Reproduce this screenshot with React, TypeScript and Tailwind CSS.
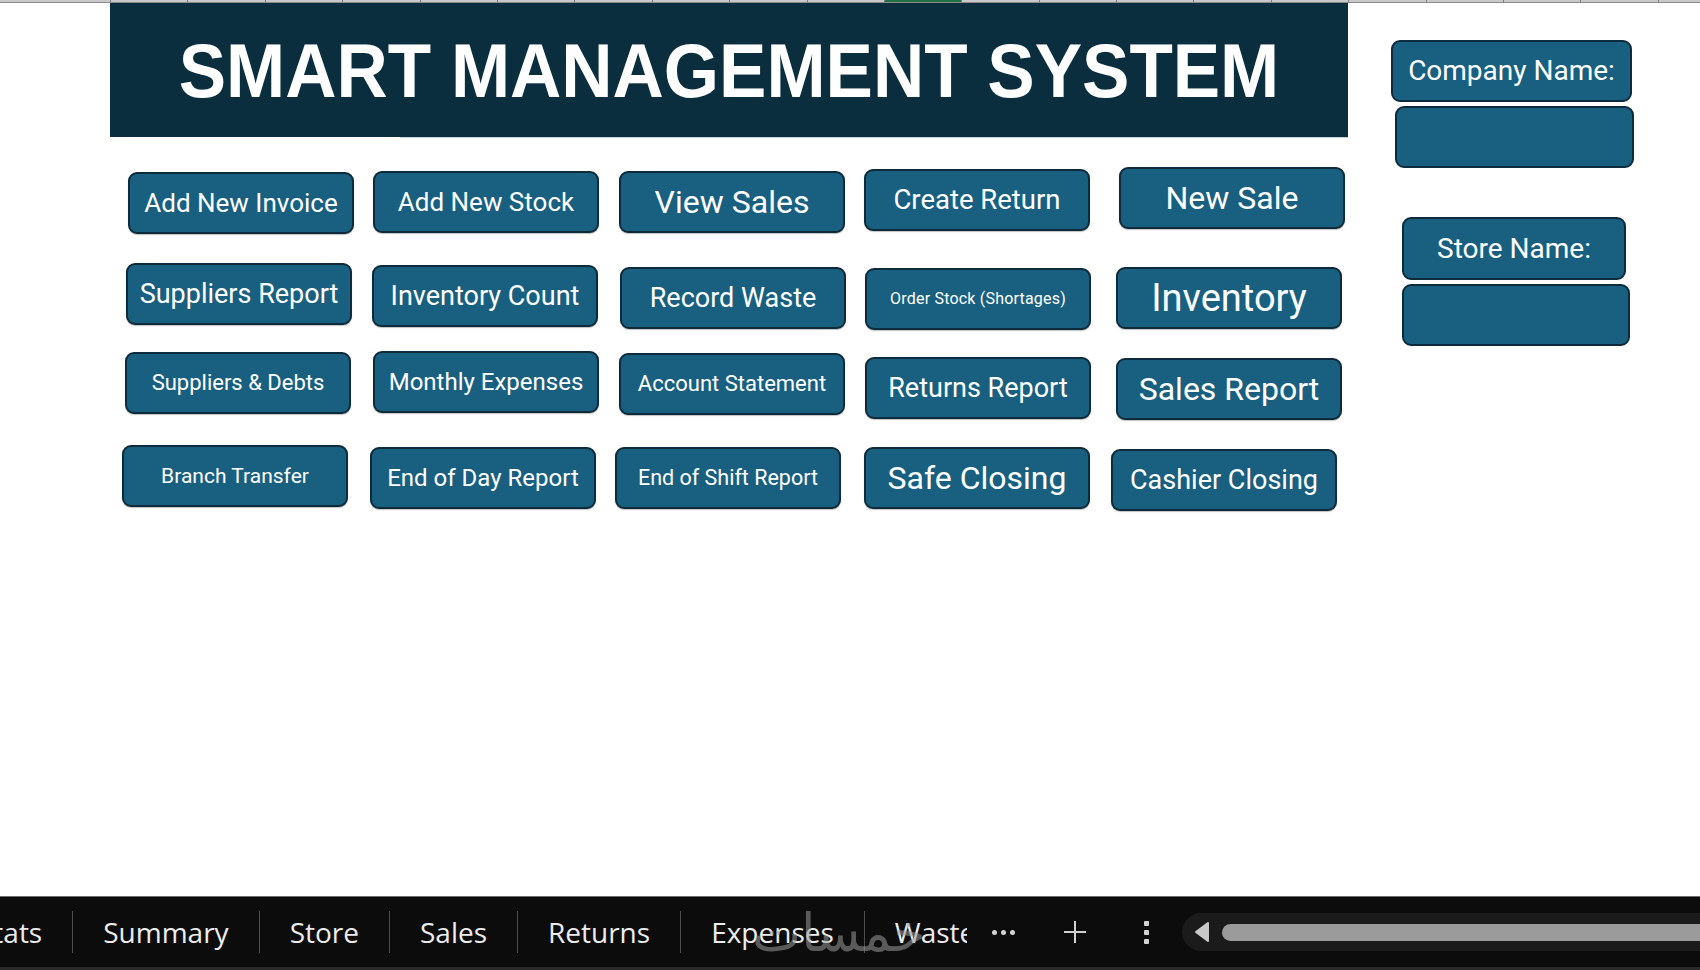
import React from "react";

type B = { t: string; c: string };

const rows: { mt: string; items: B[] }[] = [
  {
    mt: "mt-[34px]",
    items: [
      { t: "Add New Invoice", c: "ml-[3px] mt-0 text-[26px]" },
      { t: "Add New Stock", c: "ml-[1px] -mt-px text-[26px]" },
      { t: "View Sales", c: "ml-0 -mt-px text-[32px]" },
      { t: "Create Return", c: "-ml-[2px] -mt-[3px] text-[27.5px]" },
      { t: "New Sale", c: "ml-[6px] -mt-[5px] text-[32px]" },
    ],
  },
  {
    mt: "mt-[31px]",
    items: [
      { t: "Suppliers Report", c: "ml-[1px] -mt-[2px] text-[27px]" },
      { t: "Inventory Count", c: "ml-0 mt-0 text-[27px]" },
      { t: "Record Waste", c: "ml-[1px] mt-[2px] text-[27px]" },
      { t: "Order Stock (Shortages)", c: "-ml-px mt-[3px] text-[16px] tracking-[0.2px]" },
      { t: "Inventory", c: "ml-[3px] mt-[2px] text-[38px]" },
    ],
  },
  {
    mt: "mt-[26px]",
    items: [
      { t: "Suppliers & Debts", c: "ml-0 -mt-px text-[22px]" },
      { t: "Monthly Expenses", c: "ml-[1px] -mt-[2px] text-[24px]" },
      { t: "Account Statement", c: "ml-0 mt-0 text-[22px]" },
      { t: "Returns Report", c: "-ml-px mt-[4px] text-[27px]" },
      { t: "Sales Report", c: "ml-[3px] mt-[5px] text-[32px]" },
    ],
  },
  {
    mt: "mt-[32px]",
    items: [
      { t: "Branch Transfer", c: "-ml-[3px] -mt-[2px] text-[21px]" },
      { t: "End of Day Report", c: "-ml-[2px] mt-0 text-[24px]" },
      { t: "End of Shift Report", c: "-ml-[4px] mt-0 text-[21.5px]" },
      { t: "Safe Closing", c: "-ml-[2px] mt-0 text-[32px]" },
      { t: "Cashier Closing", c: "-ml-[2px] mt-[2px] text-[27px]" },
    ],
  },
];

const btn =
  "flex h-[62px] w-[226px] items-center justify-center rounded-[9px] border-2 border-[#0d2b3a] bg-[#185f80] text-white whitespace-nowrap leading-none font-[Roboto,sans-serif] shadow-[0_1px_1px_rgba(0,0,0,0.25)]";

const tabs = ["Summary", "Store", "Sales", "Returns", "Expenses", "Waste"];

export default function App() {
  return (
    <div className="relative flex h-[970px] w-[1700px] flex-col overflow-hidden bg-white">
      {/* column header remnant */}
      <div className="flex h-[3px] shrink-0 border-b border-[#8a8a8a] bg-[#c9c9c9]">
        <div className="w-[110px] shrink-0" />
        {Array.from({ length: 21 }).map((_, i) => (
          <div
            key={i}
            className={
              i === 10
                ? "h-full w-[77.4px] shrink-0 border-l border-[#7a7a7a] bg-[#217346]"
                : "h-full w-[77.4px] shrink-0 border-l border-[#7a7a7a]"
            }
          />
        ))}
      </div>

      {/* main */}
      <div className="flex flex-1">
        <div className="ml-[110px] w-[1238px] shrink-0">
          <div className="flex h-[134px] items-center justify-center bg-[#0b2e3f]">
            <h1 className="scale-y-[1.08] whitespace-nowrap font-['Liberation_Sans',Arial,sans-serif] text-[71px] font-bold leading-none text-white">
              SMART MANAGEMENT SYSTEM
            </h1>
          </div>
          <div className="ml-[290px] h-px bg-[#c4d3da]" />

          {rows.map((r, ri) => (
            <div
              key={ri}
              className={`${r.mt} ml-[15px] grid grid-cols-[226px_226px_226px_226px_226px] gap-x-[21px]`}
            >
              {r.items.map((b) => (
                <div key={b.t} className="h-[62px]">
                  <div className={`${btn} ${b.c}`}>{b.t}</div>
                </div>
              ))}
            </div>
          ))}
        </div>

        {/* side panel */}
        <div className="ml-[43px] mt-[37px] flex flex-col font-[Roboto,sans-serif] text-white">
          <div className="flex h-[62px] w-[241px] items-center justify-center rounded-[9px] border-2 border-[#0d2b3a] bg-[#185f80] text-[28px] leading-none">
            Company Name:
          </div>
          <div className="ml-[4px] mt-[4px] h-[62px] w-[239px] rounded-[9px] border-2 border-[#0d2b3a] bg-[#185f80]" />
          <div className="ml-[11px] mt-[49px] flex h-[63px] w-[224px] items-center justify-center rounded-[9px] border-2 border-[#0d2b3a] bg-[#185f80] text-[28px] leading-none">
            Store Name:
          </div>
          <div className="ml-[11px] mt-[4px] h-[62px] w-[228px] rounded-[9px] border-2 border-[#0d2b3a] bg-[#185f80]" />
        </div>
      </div>

      {/* sheet tab bar */}
      <div className="relative flex h-[74px] shrink-0 flex-col border-t border-[#6b6b6b] bg-[#0c0c0c]">
        <div className="flex flex-1 items-center">
          <div className="flex w-[967px] shrink-0 items-center overflow-hidden font-['Open_Sans','Noto_Sans',sans-serif] text-[28px] leading-none text-[#ececec]">
            <span className="-ml-[22px] shrink-0 pr-[30px]">Stats</span>
            {tabs.map((t) => (
              <React.Fragment key={t}>
                <div className="h-[42px] w-px shrink-0 bg-[#4d4d4d]" />
                <span className="shrink-0 px-[30px]">{t}</span>
              </React.Fragment>
            ))}
          </div>

          {/* more */}
          <div className="ml-[25px] flex gap-[4px]">
            <div className="h-[5px] w-[5px] rounded-full bg-[#d4d4d4]" />
            <div className="h-[5px] w-[5px] rounded-full bg-[#d4d4d4]" />
            <div className="h-[5px] w-[5px] rounded-full bg-[#d4d4d4]" />
          </div>

          {/* plus */}
          <svg className="ml-[48px]" width="24" height="24" viewBox="0 0 24 24">
            <path d="M12 1v22M1 12h22" stroke="#d0d0d0" strokeWidth="2" />
          </svg>

          {/* kebab */}
          <div className="ml-[57px] flex flex-col gap-[4px]">
            <div className="h-[5px] w-[5px] rounded-[1px] bg-[#d4d4d4]" />
            <div className="h-[5px] w-[5px] rounded-[1px] bg-[#d4d4d4]" />
            <div className="h-[5px] w-[5px] rounded-[1px] bg-[#d4d4d4]" />
          </div>

          {/* scroll bar */}
          <div className="ml-[33px] flex h-[38px] flex-1 items-center rounded-l-full bg-[#1b1b1b] pl-[12px]">
            <svg width="15" height="20" viewBox="0 0 15 20">
              <path d="M14 1 L14 19 L2 10 Z" fill="#c9c9c9" stroke="#c9c9c9" strokeLinejoin="round" strokeWidth="2" />
            </svg>
            <div className="ml-[13px] h-[17px] flex-1 rounded-l-full bg-[#9b9b9b]" />
          </div>
        </div>
        <div className="h-[3px] bg-[#2a2a2a]" />

        {/* watermark */}
        <div className="pointer-events-none absolute left-[752px] top-[10px] font-['DejaVu_Sans',sans-serif] text-[52px] leading-none text-[#9a9a9a] opacity-55" dir="rtl">
          خمسات
        </div>
      </div>
    </div>
  );
}
